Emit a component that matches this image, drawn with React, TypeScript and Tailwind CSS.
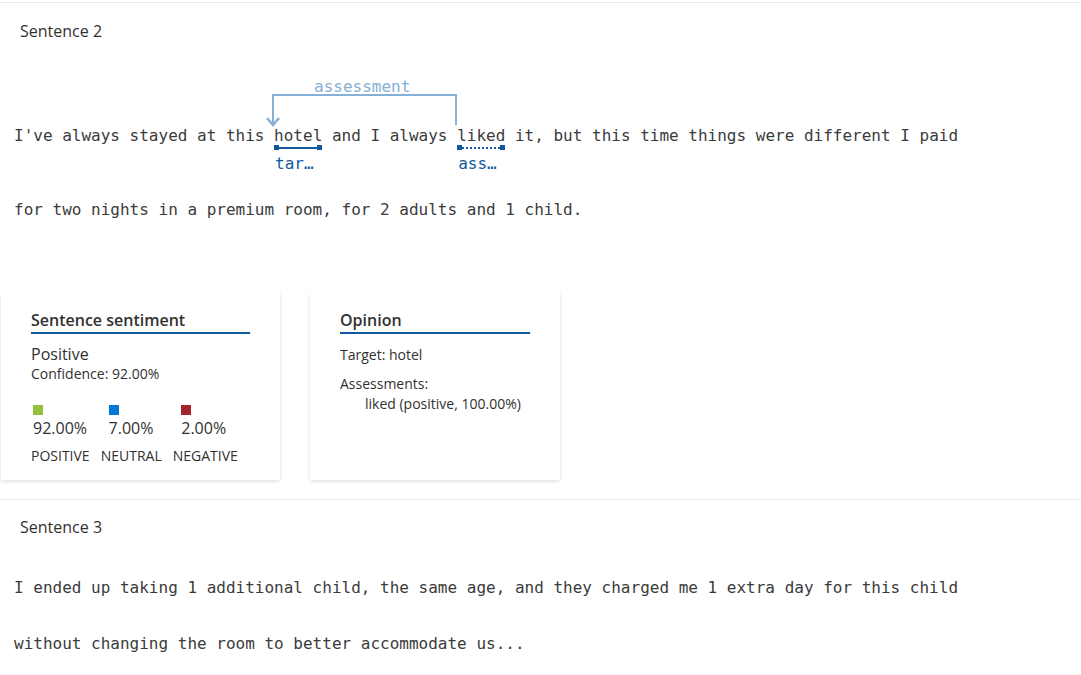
import React from 'react';

const ui = 'font-["Segoe_UI","Open_Sans",sans-serif]';
const mono = 'font-["DejaVu_Sans_Mono","Liberation_Mono",monospace]';

function Mark({ word, label, dotted }: { word: string; label: string; dotted?: boolean }) {
  return (
    <span className="relative inline-block">
      {word}
      <span className="absolute left-0 right-0 top-[20px] flex items-center">
        <span className="h-[5px] w-[5px] bg-[#0f5a9e]" />
        <span
          className={
            dotted
              ? 'h-0 flex-1 border-t-2 border-dotted border-[#0f5a9e]'
              : 'h-[2px] flex-1 bg-[#0f5a9e]'
          }
        />
        <span className="h-[5px] w-[5px] bg-[#0f5a9e]" />
      </span>
      <span className="absolute left-[1px] top-[28px] whitespace-nowrap text-[#0f5a9e]">{label}</span>
    </span>
  );
}

function Arc() {
  return (
    <svg className="pointer-events-none absolute left-0 top-0" width="520" height="60" viewBox="0 0 520 60">
      <text x="300" y="18" fontSize="16" fill="#86b0d6" fontFamily="DejaVu Sans Mono, monospace">
        assessment
      </text>
      <path d="M442 51 V21 H259 V51" fill="none" stroke="#86b0d6" strokeWidth="2" />
      <path d="M253 44 L259 51 L265 44" fill="none" stroke="#86b0d6" strokeWidth="2.5" />
    </svg>
  );
}

function Sentiment() {
  const cols = [
    { c: 'bg-[#92c03c]', v: '92.00%', w: 'w-[77px]' },
    { c: 'bg-[#0078d4]', v: '7.00%', w: 'w-[74px]' },
    { c: 'bg-[#a4262c]', v: '2.00%', w: 'w-[70px]' },
  ];
  return (
    <div className="ml-[1px] h-[188px] w-[279px] bg-white px-[30px] pt-[17px] shadow-[0_1.6px_3.6px_rgba(0,0,0,0.13),0_0.3px_0.9px_rgba(0,0,0,0.11)]">
      <div className="border-b-2 border-[#0f5a9e] pb-[1px] text-[16px] font-semibold leading-[22px] text-[#323130]">
        Sentence sentiment
      </div>
      <div className="mt-[9px] text-[16px] leading-[22px] text-[#323130]">Positive</div>
      <div className="text-[14px] leading-[18px] text-[#323130]">Confidence: 92.00%</div>
      <div className="mt-[22px] flex pl-[2px]">
        {cols.map((x) => (
          <div key={x.v} className={x.w}>
            <div className={`h-[10px] w-[10px] ${x.c}`} />
            <div className="mt-[2px] text-[16px] leading-[22px] text-[#323130]">{x.v}</div>
          </div>
        ))}
      </div>
      <div className="mt-[8px] flex gap-[11px] text-[14px] leading-[18px] text-[#323130]">
        <span>POSITIVE</span>
        <span>NEUTRAL</span>
        <span>NEGATIVE</span>
      </div>
    </div>
  );
}

function Opinion() {
  return (
    <div className="h-[188px] w-[250px] bg-white px-[30px] pt-[17px] shadow-[0_1.6px_3.6px_rgba(0,0,0,0.13),0_0.3px_0.9px_rgba(0,0,0,0.11)]">
      <div className="border-b-2 border-[#0f5a9e] pb-[1px] text-[16px] font-semibold leading-[22px] text-[#323130]">
        Opinion
      </div>
      <div className="mt-[12px] text-[14px] leading-[18px] text-[#323130]">Target: hotel</div>
      <div className="mt-[11px] text-[14px] leading-[18px] text-[#323130]">Assessments:</div>
      <div className="mt-[2px] pl-[25px] text-[14px] leading-[18px] text-[#323130]">liked (positive, 100.00%)</div>
    </div>
  );
}

export default function App() {
  return (
    <div className={`min-h-[675px] w-[1081px] bg-white ${ui}`}>
      <div className="mt-[2px] border-t border-[#edebe9]">
        <div className="pl-[20px] pt-[17px] text-[16px] leading-[22px] text-[#323130]">Sentence 2</div>
        <div className={`relative ml-[14px] pt-[83px] text-[16px] leading-[22px] text-[#3b3b3b] ${mono}`}>
          <div className="absolute left-0 top-[32px]">
            <Arc />
          </div>
          <div className="whitespace-pre">
            {"I've always stayed at this "}
            <Mark word="hotel" label="tar…" />
            {' and I always '}
            <Mark word="liked" label="ass…" dotted />
            {' it, but this time things were different I paid'}
          </div>
          <div className="mt-[52px] whitespace-pre">for two nights in a premium room, for 2 adults and 1 child.</div>
        </div>
        <div className="mt-[71px] flex gap-[30px]">
          <Sentiment />
          <Opinion />
        </div>
      </div>
      <div className="mt-[19px] border-t border-[#edebe9]">
        <div className="pl-[20px] pt-[16px] text-[16px] leading-[22px] text-[#323130]">Sentence 3</div>
        <div className={`ml-[14px] text-[16px] leading-[22px] text-[#3b3b3b] ${mono}`}>
          <div className="mt-[39px] whitespace-pre">
            I ended up taking 1 additional child, the same age, and they charged me 1 extra day for this child
          </div>
          <div className="mt-[34px] whitespace-pre">without changing the room to better accommodate us...</div>
        </div>
      </div>
    </div>
  );
}
